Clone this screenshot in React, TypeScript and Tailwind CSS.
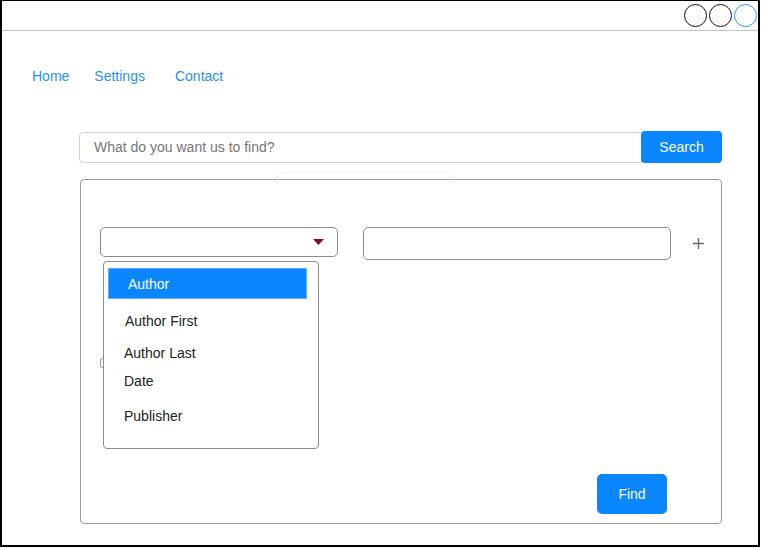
const font = { fontFamily: '"Liberation Sans", Arial, sans-serif' };

const navLinks = [
  { label: "Home", ml: "ml-0" },
  { label: "Settings", ml: "ml-[25px]" },
  { label: "Contact", ml: "ml-[30px]" },
];

function Caret() {
  return (
    <svg width="11" height="6" viewBox="0 0 11 6">
      <path d="M0 0 H11 L5.5 6 Z" fill="#8b0a1a" />
    </svg>
  );
}

function Plus() {
  return (
    <svg width="11" height="11" viewBox="0 0 11 11">
      <path d="M5.5 0 V11 M0 5.5 H11" stroke="#6b6b6b" strokeWidth="1.4" />
    </svg>
  );
}

function FieldMenu() {
  return (
    <div className="absolute left-[22px] top-[81px] z-10 h-[188px] w-[216px] rounded-[4px] border border-[#8c8c8c] bg-white text-[14px] leading-[16px] text-[#222]">
      <div className="ml-[4px] mt-[6px] flex h-[31px] w-[199px] items-center border border-[#5fb0ff] bg-[#0a86ff] pl-[19px] text-white">
        Author
      </div>
      <div className="mt-[14px] pl-[21px]">Author First</div>
      <div className="mt-[16px] pl-[20px]">Author Last</div>
      <div className="mt-[12px] pl-[20px]">Date</div>
      <div className="mt-[19px] pl-[20px]">Publisher</div>
    </div>
  );
}

export default function App() {
  return (
    <div
      style={font}
      className="flex h-[547px] w-[760px] flex-col border-b-2 border-l-2 border-r-2 border-t border-black bg-white"
    >
      <div className="flex h-[30px] shrink-0 items-center justify-end gap-[2px] border-b border-[#c4c4c4] pr-[1px]">
        <div className="h-[23px] w-[23px] rounded-full border-[1.5px] border-[#111]" />
        <div className="h-[23px] w-[23px] rounded-full border-[1.5px] border-[#111]" />
        <div className="h-[23px] w-[23px] rounded-full border-[1.5px] border-[#2b95ff]" />
      </div>

      <nav className="mt-[37px] flex pl-[30px] text-[14px] leading-[16px] text-[#1f8fff]">
        {navLinks.map((l) => (
          <span key={l.label} className={l.ml}>
            {l.label}
          </span>
        ))}
      </nav>

      <div className="ml-[77px] mt-[47px] flex items-center">
        <div className="flex h-[31px] w-[563px] items-center rounded-l-[4px] border border-[#cdd2d8] pl-[14px] text-[14px] text-[#767676]">
          What do you want us to find?
        </div>
        <button className="relative z-10 -ml-[1px] h-[32px] w-[81px] rounded-[4px] bg-[#0a86ff] text-[14px] text-white">
          Search
        </button>
      </div>

      <div className="relative ml-[78px] mt-[16px] flex h-[345px] w-[642px] flex-col rounded-[4px] border border-[#9a9a9a] bg-white">
        <div className="absolute -top-[8px] left-[196px] h-[8px] w-[175px] rounded-t-[6px] border border-b-0 border-[#f4f4f4]" />

        <div className="mt-[47px] flex items-start pl-[19px]">
          <div className="flex h-[30px] w-[238px] items-center justify-end rounded-[5px] border border-[#8c8c8c] pr-[13px]">
            <Caret />
          </div>
          <div className="ml-[25px] h-[33px] w-[308px] rounded-[5px] border border-[#8c8c8c]" />
          <div className="ml-[22px] mt-[11px]">
            <Plus />
          </div>
        </div>

        <div className="ml-[19px] mt-[98px] h-[10px] w-[10px] rounded-[2px] border border-[#999]" />

        <FieldMenu />

        <div className="mt-auto flex justify-end pb-[9px] pr-[54px]">
          <button className="h-[40px] w-[70px] rounded-[5px] bg-[#0a86ff] text-[14px] text-white">
            Find
          </button>
        </div>
      </div>
    </div>
  );
}
